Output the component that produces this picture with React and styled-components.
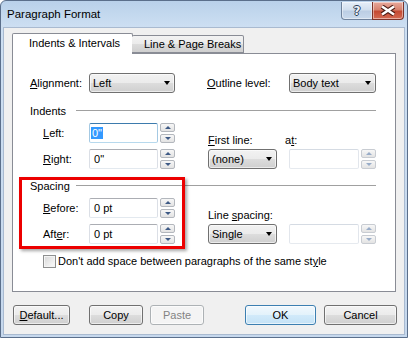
import React from 'react';
import styled, { createGlobalStyle } from 'styled-components';

const GlobalStyle = createGlobalStyle`
  html, body { margin:0; padding:0; background:#fff; }
  body {
    font-family: "Liberation Sans", Arial, sans-serif;
    font-size:11px;
    color:#000;
  }
  * { box-sizing:border-box; }
`;

const Window = styled.div`
  width:408px;
  height:338px;
  display:flex;
  flex-direction:column;
  border:1px solid #5b6f8b;
  border-radius:6px 6px 0 0;
  overflow:hidden;
  background:linear-gradient(#b9d1ea 0px, #cddff2 26px, #c6d8ed 100%);
`;

const TitleBar = styled.div`
  height:26px;
  flex-shrink:0;
  display:flex;
  align-items:flex-start;
  padding-left:6px;
`;

const Title = styled.div`
  flex:1;
  font-size:11.5px;
  line-height:26px;
  color:#000;
`;

const CaptionButtons = styled.div`
  display:flex;
  margin-top:1px;
  margin-right:3px;
`;

const CaptionButton = styled.div`
  width:32px;
  height:18px;
  display:flex;
  align-items:center;
  justify-content:center;
  border:1px solid ${({ $close }) => ($close ? '#7d3329' : '#6f829c')};
  border-top:none;
  border-radius:${({ $close }) => ($close ? '0 0 4px 0' : '0 0 0 4px')};
  margin-left:${({ $close }) => ($close ? '-1px' : '0')};
  background:${({ $close }) =>
    $close
      ? 'linear-gradient(#e8a99c 0%, #d7826f 45%, #c44a33 55%, #d46a52 100%)'
      : 'linear-gradient(#e6eef8 0%, #d2dfee 45%, #bccee4 55%, #c9d9ec 100%)'};
  box-shadow:inset 0 0 0 1px rgba(255,255,255,0.45);
`;

const HelpGlyph = styled.span`
  font-family:"DejaVu Sans", sans-serif;
  font-weight:bold;
  font-size:12px;
  line-height:12px;
  color:#eef2f7;
  text-shadow:1px 0 0 #2d3d58, -1px 0 0 #2d3d58, 0 1px 0 #2d3d58, 0 -1px 0 #2d3d58;
`;

const Body = styled.div`
  flex:1;
  margin:0 2px 2px 2px;
  border:1px solid #a9bad0;
  background:#f0f0f0;
  padding:6px 8px 0 8px;
  display:flex;
  flex-direction:column;
`;

const TabRow = styled.div`
  display:flex;
  align-items:flex-end;
  height:20px;
  margin-bottom:-1px;
  position:relative;
  z-index:1;
`;

const Tab = styled.div`
  height:${({ $active }) => ($active ? '21px' : '18px')};
  width:${({ $w }) => $w}px;
  margin-left:${({ $active }) => ($active ? '0' : '-1px')};
  margin-bottom:${({ $active }) => ($active ? '0' : '1px')};
  border:1px solid #898c95;
  border-bottom:${({ $active }) => ($active ? 'none' : '1px solid #898c95')};
  border-left:${({ $active }) => ($active ? '1px solid #898c95' : 'none')};
  border-radius:2px 2px 0 0;
  background:${({ $active }) =>
    $active ? '#fff' : 'linear-gradient(#f3f3f3 0%, #ebebeb 50%, #dddddd 50%, #cfcfcf 100%)'};
  padding-left:${({ $pl }) => $pl}px;
  line-height:${({ $active }) => ($active ? '19px' : '17px')};
  white-space:nowrap;
`;

const Panel = styled.div`
  height:239px;
  background:#fff;
  border:1px solid #898c95;
  padding:19px 19px 0 17px;
  display:flex;
  flex-direction:column;
`;

const Row = styled.div`
  display:flex;
  align-items:center;
  height:20px;
`;

const Label = styled.div`
  width:${({ $w }) => $w}px;
  margin-left:${({ $ml }) => $ml || 0}px;
  white-space:nowrap;
  flex-shrink:0;
`;

const Key = styled.span`
  text-decoration:underline;
`;

const Select = styled.div`
  position:relative;
  width:${({ $w }) => $w}px;
  height:20px;
  flex-shrink:0;
  border:1px solid #707070;
  border-radius:3px;
  background:linear-gradient(#f2f2f2 0%, #ebebeb 50%, #dddddd 50%, #cfcfcf 100%);
  box-shadow:inset 0 0 0 1px rgba(255,255,255,0.6);
  padding-left:3px;
  line-height:18px;
  white-space:nowrap;

  &::after{
    content:'';
    position:absolute;
    right:4px;
    top:7px;
    border-left:3.5px solid transparent;
    border-right:3.5px solid transparent;
    border-top:4px solid #000;
  }
`;

const TextBox = styled.div`
  width:${({ $w }) => $w}px;
  height:20px;
  margin-left:${({ $ml }) => $ml || 0}px;
  flex-shrink:0;
  background:#fff;
  border:1px solid;
  border-color:${({ $focus, $disabled }) =>
    $focus
      ? '#3d7bad #a4c9e3 #b7d9ed #a4c9e3'
      : $disabled
      ? '#d5dbe3 #e2e6ec #e6eaef #e2e6ec'
      : '#abadb3 #dbdfe6 #e3e9ef #dbdfe6'};
  border-radius:2px;
  padding-left:1px;
  line-height:18px;
  white-space:nowrap;
`;

const Selected = styled.span`
  background:#3399ff;
  color:#fff;
  padding:0 1px;
`;

const Spin = styled.div`
  width:15px;
  height:20px;
  margin-left:2px;
  display:flex;
  flex-direction:column;
  justify-content:space-between;
  flex-shrink:0;
`;

const SpinButton = styled.div`
  height:9px;
  border:1px solid ${({ $disabled }) => ($disabled ? '#c8ccd2' : '#b3b7bd')};
  border-radius:2px;
  background:linear-gradient(#f7f7f7, #e3e3e3);
  display:flex;
  align-items:center;
  justify-content:center;

  &::after{
    content:'';
    border-left:3px solid transparent;
    border-right:3px solid transparent;
    ${({ $down, $disabled }) =>
      $down
        ? `border-top:3px solid ${$disabled ? '#98acc8' : '#3e5a85'};`
        : `border-bottom:3px solid ${$disabled ? '#98acc8' : '#3e5a85'};`}
  }
`;

const GroupHeader = styled.div`
  display:flex;
  align-items:center;
  height:14px;
  margin-top:${({ $mt }) => $mt}px;
`;

const GroupLine = styled.div`
  flex:1;
  height:1px;
  background:#a0a0a0;
  margin-top:-1px;
`;

const GroupBody = styled.div`
  display:flex;
  align-items:flex-end;
  margin-top:5px;
  height:46px;
`;

const LeftCol = styled.div`
  display:flex;
  flex-direction:column;
  gap:6px;
  padding-left:13px;
`;

const RightCol = styled.div`
  display:flex;
  flex-direction:column;
  margin-left:33px;
`;

const CaptionRow = styled.div`
  display:flex;
  height:14px;
  line-height:14px;
  margin-bottom:2px;
`;

const Section = styled.div`
  position:relative;
`;

const Highlight = styled.div`
  position:absolute;
  top:8px;
  left:-11px;
  width:166px;
  height:72px;
  border:3px solid #ec0000;
  box-shadow:2px 2px 3px rgba(0,0,0,0.35);
  pointer-events:none;
`;

const CheckRow = styled.div`
  display:flex;
  align-items:center;
  height:14px;
  margin-top:10px;
  padding-left:13px;
`;

const CheckBox = styled.div`
  width:13px;
  height:13px;
  border:1px solid #8e8f8f;
  background:linear-gradient(135deg, #d6d6d6 0%, #f6f6f6 80%);
  box-shadow:inset 0 0 0 1px #f4f4f4;
  margin-right:2px;
`;

const ButtonRow = styled.div`
  display:flex;
  height:20px;
  margin-top:13px;
  margin-left:1px;
  margin-right:-1px;
`;

const Button = styled.div`
  width:${({ $w }) => $w}px;
  height:20px;
  margin-left:${({ $ml }) => $ml || 0}px;
  border:1px solid ${({ $primary, $disabled }) =>
    $primary ? '#3c7fb1' : $disabled ? '#adb2b5' : '#707070'};
  border-radius:3px;
  background:${({ $primary, $disabled }) =>
    $primary
      ? 'linear-gradient(#f1f8fd 0%, #e3f2fb 50%, #d2eafa 50%, #c4e2f6 100%)'
      : $disabled
      ? '#f4f4f4'
      : 'linear-gradient(#f2f2f2 0%, #ebebeb 50%, #dddddd 50%, #cfcfcf 100%)'};
  box-shadow:inset 0 0 0 1px rgba(255,255,255,0.6);
  color:${({ $disabled }) => ($disabled ? '#838383' : '#000')};
  display:flex;
  align-items:center;
  justify-content:center;
  line-height:18px;
`;

const Spacer = styled.div`
  flex:1;
`;

const SpinBox = ({ disabled }) => (
  <Spin>
    <SpinButton $disabled={disabled} />
    <SpinButton $down $disabled={disabled} />
  </Spin>
);

const CloseGlyph = () => (
  <svg width="18" height="11" viewBox="0 0 18 11">
    <path d="M3 1.5 L15 9.5 M15 1.5 L3 9.5" stroke="#4a1a14" strokeWidth="4.6" fill="none" />
    <path d="M3 1.5 L15 9.5 M15 1.5 L3 9.5" stroke="#ffffff" strokeWidth="2.6" fill="none" />
  </svg>
);

const App = () => {
  return (
    <>
      <GlobalStyle />
      <Window>
        <TitleBar>
          <Title>Paragraph Format</Title>
          <CaptionButtons>
            <CaptionButton>
              <HelpGlyph>?</HelpGlyph>
            </CaptionButton>
            <CaptionButton $close>
              <CloseGlyph />
            </CaptionButton>
          </CaptionButtons>
        </TitleBar>

        <Body>
          <TabRow>
            <Tab $active $w={121} $pl={16}>Indents &amp; Intervals</Tab>
            <Tab $w={112} $pl={12}>Line &amp; Page Breaks</Tab>
          </TabRow>

          <Panel>
            <Row>
              <Label $w={59}><Key>A</Key>lignment:</Label>
              <Select $w={86}>Left</Select>
              <Label $w={82} $ml={32}><Key>O</Key>utline level:</Label>
              <Select $w={87}>Body text</Select>
            </Row>

            <GroupHeader $mt={11}>
              <Label $w={46}>Indents</Label>
              <GroupLine />
            </GroupHeader>
            <GroupBody>
              <LeftCol>
                <Row>
                  <Label $w={46}><Key>L</Key>eft:</Label>
                  <TextBox $w={69} $focus><Selected>0"</Selected></TextBox>
                  <SpinBox />
                </Row>
                <Row>
                  <Label $w={46}><Key>R</Key>ight:</Label>
                  <TextBox $w={69}>&nbsp;0"</TextBox>
                  <SpinBox />
                </Row>
              </LeftCol>
              <RightCol>
                <CaptionRow>
                  <Label $w={77}><Key>F</Key>irst line:</Label>
                  <Label $w={30}>a<Key>t</Key>:</Label>
                </CaptionRow>
                <Row>
                  <Select $w={69}>(none)</Select>
                  <TextBox $w={70} $ml={12} $disabled />
                  <SpinBox disabled />
                </Row>
              </RightCol>
            </GroupBody>

            <Section>
              <GroupHeader $mt={10}>
                <Label $w={46}>Spacing</Label>
                <GroupLine />
              </GroupHeader>
              <GroupBody>
                <LeftCol>
                  <Row>
                    <Label $w={46}><Key>B</Key>efore:</Label>
                    <TextBox $w={69}>&nbsp;0 pt</TextBox>
                    <SpinBox />
                  </Row>
                  <Row>
                    <Label $w={46}>Aft<Key>e</Key>r:</Label>
                    <TextBox $w={69}>&nbsp;0 pt</TextBox>
                    <SpinBox />
                  </Row>
                </LeftCol>
                <RightCol>
                  <CaptionRow>
                    <Label $w={90}>Line <Key>s</Key>pacing:</Label>
                  </CaptionRow>
                  <Row>
                    <Select $w={69}>Single</Select>
                    <TextBox $w={70} $ml={12} $disabled />
                    <SpinBox disabled />
                  </Row>
                </RightCol>
              </GroupBody>
              <Highlight />
            </Section>

            <CheckRow>
              <CheckBox />
              <span>Don't add space between paragraphs of the same st<Key>y</Key>le</span>
            </CheckRow>
          </Panel>

          <ButtonRow>
            <Button $w={57}><span><Key>D</Key>efault...</span></Button>
            <Button $w={54} $ml={19}>Copy</Button>
            <Button $w={54} $ml={7} $disabled>Paste</Button>
            <Spacer />
            <Button $w={71} $primary>OK</Button>
            <Button $w={73} $ml={8}>Cancel</Button>
          </ButtonRow>
        </Body>
      </Window>
    </>
  );
};

export default App;
